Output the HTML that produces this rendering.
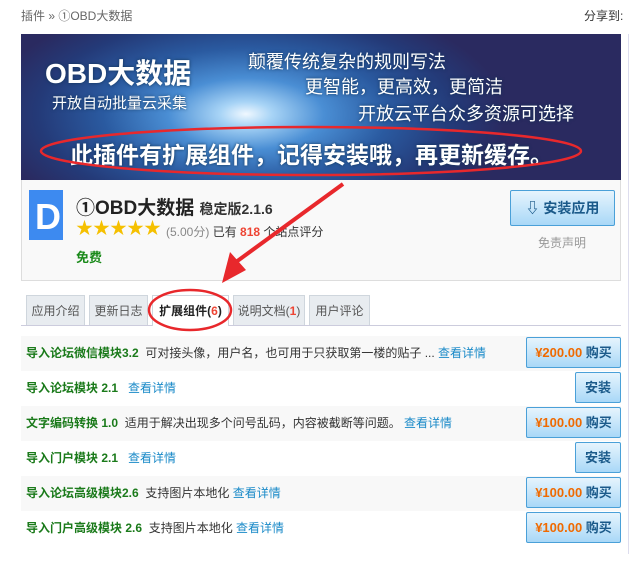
<!DOCTYPE html>
<html><head><meta charset="utf-8"><style>
*{margin:0;padding:0;box-sizing:border-box}
body{width:633px;height:567px;background:#fff;font-family:"Liberation Sans","Noto Sans CJK SC",sans-serif;font-size:12px;color:#333;position:relative;overflow:hidden}
.abs{position:absolute}
.crumb{left:21px;top:7px;color:#666;font-size:12px}
.share{left:584px;top:7px;color:#333}
.vline{left:628px;top:34px;width:1px;height:520px;background:#dde}
.banner{left:21px;top:34px;width:600px;height:146px;background:radial-gradient(ellipse 260px 120px at 225px 80px,#f0f8ff 0,#a8d4f6 10%,#4a8ed4 30%,#2a5aa0 55%,#243a78 80%,#2a2a60 100%);overflow:hidden;color:#fff}
.banner div{position:absolute;white-space:nowrap;text-shadow:0 0 3px #135}
.box{left:21px;top:180px;width:600px;height:101px;border:1px solid #ddd;border-top:none;background:#f9f9f9}
.btn{border:1px solid #4aa0d8;border-radius:2px;background:linear-gradient(#e6f4fd,#a9d8f7);color:#1b5a8a;font-weight:bold;text-align:center}
.tab{top:295px;height:30px;background:#e8ecf0;border:1px solid #cfd6dd;border-bottom:none;color:#555;font-size:12px;line-height:30px;text-align:center}
.row{left:21px;width:600px;height:35px;line-height:35px;font-size:12px;padding-left:5px}
.row b{color:#1a7a1a}
.row a{color:#1a8ac8;text-decoration:none}
.rb{position:absolute;right:0;top:1px;height:31px;line-height:29px;font-size:13px}
.p{color:#f06a00}
</style></head><body>
<div class="abs crumb">插件 » ①OBD大数据</div>
<div class="abs share">分享到:</div>
<div class="abs vline"></div>
<div class="abs banner">
<div style="left:24px;top:22px;font-size:28px;font-weight:bold;line-height:36px">OBD大数据</div>
<div style="left:31px;top:58px;font-size:15px">开放自动批量云采集</div>
<div style="left:227px;top:14px;font-size:18px">颠覆传统复杂的规则写法</div>
<div style="left:284px;top:39px;font-size:18px">更智能，更高效，更简洁</div>
<div style="left:337px;top:66px;font-size:18px">开放云平台众多资源可选择</div>
<div style="left:49px;top:102px;font-size:23px;font-weight:bold">此插件有扩展组件，记得安装哦，再更新缓存。</div>
</div>
<svg class="abs" style="left:0;top:0" width="633" height="567">
<ellipse cx="311" cy="151" rx="270" ry="24" fill="none" stroke="#e8282c" stroke-width="2.5"/>
</svg>
<div class="abs box"></div>
<div class="abs" style="left:29px;top:190px;width:34px;height:50px;background:#3d8af0"></div>
<div class="abs" style="left:35px;top:197px;color:#fff;font-size:36px;font-weight:bold;line-height:40px">D</div>
<div class="abs" style="left:76px;top:193px;font-size:19px;font-weight:bold;color:#222">①OBD大数据 <span style="font-size:14px;color:#333">稳定版2.1.6</span></div>
<div class="abs" style="left:76px;top:218px;font-size:17px;color:#f5c000;line-height:22px">★★★★★</div>
<div class="abs" style="left:166px;top:223px;color:#888">(5.00分) <span style="color:#333">已有 <b style="color:#e43">818</b> 个站点评分</span></div>
<div class="abs" style="left:76px;top:247px;color:#1a8a1a;font-weight:bold;font-size:13px">免费</div>
<div class="abs btn" style="left:510px;top:190px;width:105px;height:36px;line-height:34px;font-size:14px">⇩ 安装应用</div>
<div class="abs" style="left:538px;top:234px;color:#999">免责声明</div>
<div class="abs" style="left:21px;top:325px;width:600px;height:1px;background:#ccd"></div>
<div class="abs tab" style="left:26px;width:59px">应用介绍</div>
<div class="abs tab" style="left:89px;width:59px">更新日志</div>
<div class="abs tab" style="left:152px;width:77px;background:#fff;height:31px;color:#222;font-weight:bold">扩展组件(<span style="color:#e43">6</span>)</div>
<div class="abs tab" style="left:233px;width:72px">说明文档(<b style="color:#e43">1</b>)</div>
<div class="abs tab" style="left:309px;width:61px">用户评论</div>
<svg class="abs" style="left:0;top:0" width="633" height="567">
<ellipse cx="190" cy="310" rx="41" ry="20" fill="none" stroke="#e8282c" stroke-width="2.5"/>
<path d="M343 184 L236 262" stroke="#e8282c" stroke-width="4" fill="none"/>
<path d="M222 283 L230 252 L246 270 Z" fill="#e8282c"/>
</svg>
<div class="abs row" style="top:336px;background:#f8f8f8"><b>导入论坛微信模块3.2</b>&nbsp; 可对接头像，用户名，也可用于只获取第一楼的贴子 ... <a>查看详情</a><div class="rb btn" style="width:95px"><span class="p">¥200.00</span> 购买</div></div>
<div class="abs row" style="top:371px"><b>导入论坛模块 2.1</b>&nbsp;&nbsp; <a>查看详情</a><div class="rb btn" style="width:46px">安装</div></div>
<div class="abs row" style="top:406px;background:#f8f8f8"><b>文字编码转换 1.0</b>&nbsp; 适用于解决出现多个问号乱码，内容被截断等问题。 <a>查看详情</a><div class="rb btn" style="width:95px"><span class="p">¥100.00</span> 购买</div></div>
<div class="abs row" style="top:441px"><b>导入门户模块 2.1</b>&nbsp;&nbsp; <a>查看详情</a><div class="rb btn" style="width:46px">安装</div></div>
<div class="abs row" style="top:476px;background:#f8f8f8"><b>导入论坛高级模块2.6</b>&nbsp; 支持图片本地化 <a>查看详情</a><div class="rb btn" style="width:95px"><span class="p">¥100.00</span> 购买</div></div>
<div class="abs row" style="top:511px"><b>导入门户高级模块 2.6</b>&nbsp; 支持图片本地化 <a>查看详情</a><div class="rb btn" style="width:95px"><span class="p">¥100.00</span> 购买</div></div>
</body></html>
